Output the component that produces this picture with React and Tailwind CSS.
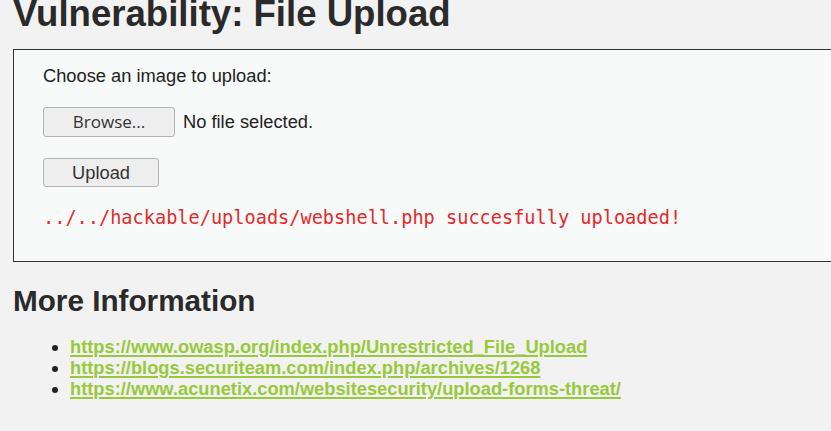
import React from 'react';

const links = [
  'https://www.owasp.org/index.php/Unrestricted_File_Upload',
  'https://blogs.securiteam.com/index.php/archives/1268',
  'https://www.acunetix.com/websitesecurity/upload-forms-threat/',
];

export default function App() {
  return (
    <div className="w-[831px] h-[431px] overflow-hidden bg-[#f2f2f2] text-[#222] font-['Liberation_Sans',Arial,sans-serif]">
      <div className="pl-[13px]">
        {/* Titel */}
        <h1 className="text-[36.6px] font-bold leading-none mt-[-4px] text-[#2a2a2a] whitespace-nowrap">
          Vulnerability: File Upload
        </h1>

        {/* Upload-Box */}
        <div className="mt-[16px] w-[840px] h-[213px] border border-[#333] bg-[#f8f9f9] pl-[29px] pt-[15px]">
          <p className="text-[18.3px] leading-[22px]">Choose an image to upload:</p>
          <div className="mt-[20px] flex items-center gap-[8px]">
            <button className="w-[132px] h-[30px] rounded-[3px] border border-[#b3b3b3] bg-[#eeeeee] text-[17px] text-[#333] font-['Open_Sans',sans-serif]">
              Browse...
            </button>
            <span className="text-[18.3px]">No file selected.</span>
          </div>
          <button className="mt-[21px] w-[116px] h-[29px] rounded-[3px] border border-[#b3b3b3] bg-[#eeeeee] text-[18.3px] text-[#333]">
            Upload
          </button>
          <pre className="mt-[20px] text-[18.6px] leading-[22px] text-[#e22a2a] font-['DejaVu_Sans_Mono',monospace]">
            ../../hackable/uploads/webshell.php succesfully uploaded!
          </pre>
        </div>

        {/* Mehr Infos */}
        <h2 className="mt-[24px] text-[29.7px] font-bold leading-none text-[#2a2a2a]">More Information</h2>
        <ul className="mt-[21px] pl-[57px] list-disc text-[18.3px] leading-[21px] font-bold">
          {links.map((l) => (
            <li key={l}>
              <a href={l} className="text-[#98c93c] underline underline-offset-2 decoration-2">
                {l}
              </a>
            </li>
          ))}
        </ul>
      </div>
    </div>
  );
}
